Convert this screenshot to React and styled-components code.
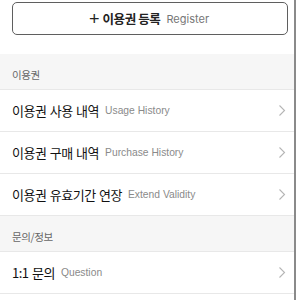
import styled, { createGlobalStyle } from 'styled-components'

const GlobalStyle = createGlobalStyle`
    html, body {
        margin: 0;
        padding: 0;
        background: #fff;
        font-family: "Noto Sans CJK KR", "Noto Sans", sans-serif;
    }
`;

const menu = [
    {
        title: '이용권',
        items: [
            { ko: '이용권 사용 내역', en: 'Usage History' },
            { ko: '이용권 구매 내역', en: 'Purchase History' },
            { ko: '이용권 유효기간 연장', en: 'Extend Validity' },
        ],
    },
    {
        title: '문의/정보',
        items: [
            { ko: '1:1 문의', en: 'Question' },
        ],
    },
];

function Chevron() {
    return (
        <svg width="8" height="13" viewBox="0 0 8 13" fill="none">
            <path d="M1.5 1.5 L6.5 6.5 L1.5 11.5" stroke="#b5b5b5" strokeWidth="1.1" />
        </svg>
    )
}

export default function App() {
    return (
        <>
            <GlobalStyle />
            <Panel>
                <Top>
                    <RegisterButton>
                        <Plus>+</Plus>
                        <ButtonLabel>이용권 등록</ButtonLabel>
                        <SubLabel>Register</SubLabel>
                    </RegisterButton>
                </Top>
                {menu.map((section, i) => (
                    <section key={i}>
                        <SectionHeader>{section.title}</SectionHeader>
                        {section.items.map((item, j) => (
                            <Row key={j}>
                                <RowTitle>{item.ko}</RowTitle>
                                <RowSub>{item.en}</RowSub>
                                <ChevronBox><Chevron /></ChevronBox>
                            </Row>
                        ))}
                    </section>
                ))}
            </Panel>
        </>
    )
}

const Panel = styled.div`
    width: 294px;
    height: 300px;
    overflow: hidden;
    border-right: 2px solid #8a8a8a;
    background: #fff;
`;

const Top = styled.div`
    padding: 2px 6px 19px 12px;
`;

const RegisterButton = styled.div`
    height: 31px;
    border: 1px solid #5f5f5f;
    border-radius: 5px;
    display: flex;
    align-items: center;
    justify-content: center;
    padding-right: 2px;
`;

const Plus = styled.span`
    font-family: "Liberation Sans", sans-serif;
    font-size: 18px;
    font-weight: 400;
    color: #222;
    margin-right: 3px;
    line-height: 1;
`;

const ButtonLabel = styled.span`
    font-size: 12.5px;
    font-weight: 700;
    color: #222;
    letter-spacing: -0.4px;
`;

const SubLabel = styled.span`
    font-family: Inter, "Liberation Sans", sans-serif;
    font-size: 11px;
    color: #777;
    margin-left: 6px;
`;

const SectionHeader = styled.div`
    background: #f6f6f6;
    padding: 0 12px 7px;
    display: flex;
    align-items: flex-end;
    box-sizing: border-box;
    height: 36px;
    font-size: 10.5px;
    letter-spacing: -0.4px;
    color: #666;
    border-bottom: 1px solid #e8e8e8;
`;

const Row = styled.div`
    height: 41px;
    display: flex;
    align-items: center;
    padding: 0 12px;
    border-bottom: 1px solid #e8e8e8;
`;

const RowTitle = styled.span`
    font-size: 13px;
    color: #111;
    letter-spacing: -0.5px;
    word-spacing: 1px;
`;

const RowSub = styled.span`
    font-family: "Liberation Sans", sans-serif;
    font-size: 10.3px;
    color: #8a8a8a;
    margin-left: 6px;
`;

const ChevronBox = styled.span`
    margin-left: auto;
    display: flex;
    align-items: center;
    margin-right: -4px;
`;
